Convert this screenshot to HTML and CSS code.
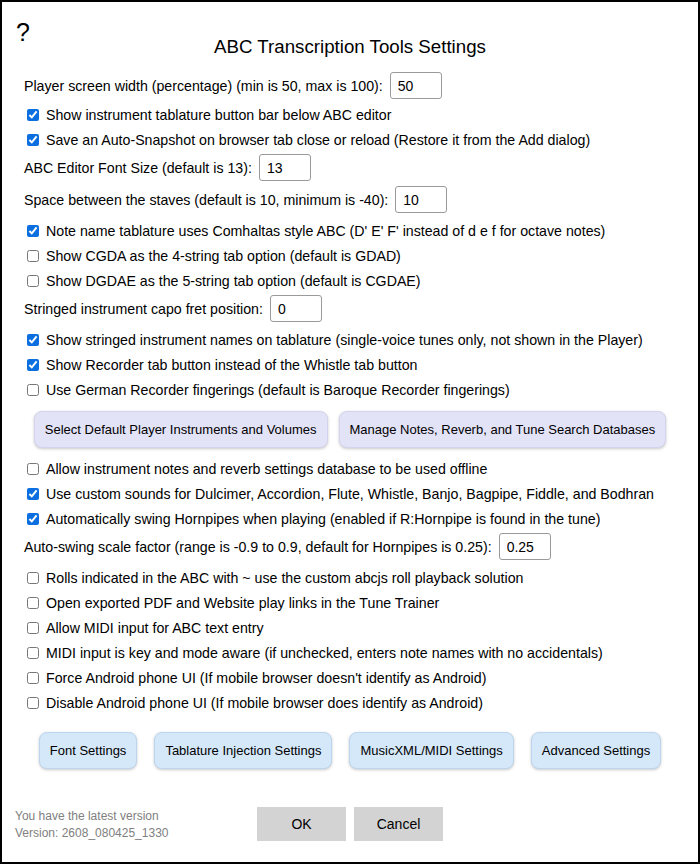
FILE: index.html
```html
<!DOCTYPE html>
<html>
<head>
<meta charset="utf-8">
<title>ABC Transcription Tools Settings</title>
<link rel="stylesheet" href="styles.css">
</head>
<body>
<div class="dialog">
  <button class="help">?</button>
  <h1 class="title">ABC Transcription Tools Settings</h1>
  <div class="rows">
    <div class="field first"><label>Player screen width (percentage) (min is 50, max is 100):</label><input class="num" type="text" value="50"></div>
    <label class="cb"><input type="checkbox" checked>Show instrument tablature button bar below ABC editor</label>
    <label class="cb"><input type="checkbox" checked>Save an Auto-Snapshot on browser tab close or reload (Restore it from the Add dialog)</label>
    <div class="field"><label>ABC Editor Font Size (default is 13):</label><input class="num" type="text" value="13"></div>
    <div class="field"><label>Space between the staves (default is 10, minimum is -40):</label><input class="num" type="text" value="10"></div>
    <label class="cb"><input type="checkbox" checked>Note name tablature uses Comhaltas style ABC (D' E' F' instead of d e f for octave notes)</label>
    <label class="cb"><input type="checkbox">Show CGDA as the 4-string tab option (default is GDAD)</label>
    <label class="cb"><input type="checkbox">Show DGDAE as the 5-string tab option (default is CGDAE)</label>
    <div class="field"><label>Stringed instrument capo fret position:</label><input class="num" type="text" value="0"></div>
    <label class="cb"><input type="checkbox" checked>Show stringed instrument names on tablature (single-voice tunes only, not shown in the Player)</label>
    <label class="cb"><input type="checkbox" checked>Show Recorder tab button instead of the Whistle tab button</label>
    <label class="cb"><input type="checkbox">Use German Recorder fingerings (default is Baroque Recorder fingerings)</label>
    <div class="btnrow purple-row">
      <button class="btn purple">Select Default Player Instruments and Volumes</button>
      <button class="btn purple">Manage Notes, Reverb, and Tune Search Databases</button>
    </div>
    <label class="cb"><input type="checkbox">Allow instrument notes and reverb settings database to be used offline</label>
    <label class="cb"><input type="checkbox" checked>Use custom sounds for Dulcimer, Accordion, Flute, Whistle, Banjo, Bagpipe, Fiddle, and Bodhran</label>
    <label class="cb"><input type="checkbox" checked>Automatically swing Hornpipes when playing (enabled if R:Hornpipe is found in the tune)</label>
    <div class="field"><label>Auto-swing scale factor (range is -0.9 to 0.9, default for Hornpipes is 0.25):</label><input class="num" type="text" value="0.25"></div>
    <label class="cb"><input type="checkbox">Rolls indicated in the ABC with ~ use the custom abcjs roll playback solution</label>
    <label class="cb"><input type="checkbox">Open exported PDF and Website play links in the Tune Trainer</label>
    <label class="cb"><input type="checkbox">Allow MIDI input for ABC text entry</label>
    <label class="cb"><input type="checkbox">MIDI input is key and mode aware (if unchecked, enters note names with no accidentals)</label>
    <label class="cb"><input type="checkbox">Force Android phone UI (If mobile browser doesn't identify as Android)</label>
    <label class="cb"><input type="checkbox">Disable Android phone UI (If mobile browser does identify as Android)</label>
    <div class="btnrow blue-row">
      <button class="btn blue">Font Settings</button>
      <button class="btn blue">Tablature Injection Settings</button>
      <button class="btn blue">MusicXML/MIDI Settings</button>
      <button class="btn blue">Advanced Settings</button>
    </div>
  </div>
  <div class="footer">
    <div class="version">
      <div>You have the latest version</div>
      <div>Version: 2608_080425_1330</div>
    </div>
    <div class="actions">
      <button class="act">OK</button>
      <button class="act">Cancel</button>
    </div>
    <div></div>
  </div>
</div>
</body>
</html>
```
FILE: styles.css
```css
html, body {
  margin: 0;
  padding: 0;
  background: #fff;
}

body {
  font-family: "Liberation Sans", Arial, sans-serif;
  color: #000;
}

.dialog {
  position: relative;
  box-sizing: border-box;
  width: 700px;
  height: 864px;
  border: 2px solid #000;
  background: #fff;
}

.help {
  position: absolute;
  left: 14px;
  top: 16px;
  border: 0;
  background: none;
  padding: 0;
  font-family: "Liberation Sans", Arial, sans-serif;
  font-size: 25px;
  line-height: 29px;
  color: #000;
}

.title {
  margin: 0;
  padding-top: 34px;
  font-size: 18.7px;
  line-height: 22px;
  font-weight: normal;
  text-align: center;
}

.rows {
  padding: 0 22px;
  font-size: 14.2px;
}

.field {
  display: flex;
  align-items: center;
  height: 27px;
  margin: 2px 0 5px;
}

.field.first {
  margin-top: 14px;
  margin-bottom: 3px;
}

.num {
  box-sizing: border-box;
  width: 52px;
  height: 27px;
  margin: 0 0 0 7px;
  padding: 0 7px;
  border: 1px solid #9a9a9a;
  border-radius: 3px;
  font-family: "Liberation Sans", Arial, sans-serif;
  font-size: 14px;
  color: #000;
  background: #fff;
}

.cb {
  display: flex;
  align-items: center;
  height: 25px;
  white-space: nowrap;
}

.cb input {
  width: 12px;
  height: 12px;
  margin: 0 7px 0 3px;
  accent-color: #0b6fe0;
}

.btnrow {
  display: flex;
  justify-content: center;
}

.purple-row {
  gap: 11px;
  margin: 9px 0 8px;
}

.blue-row {
  gap: 17px;
  margin: 17px 0 0;
}

.btn {
  height: 37px;
  padding: 0 10px;
  border-radius: 8px;
  font-family: "Liberation Sans", Arial, sans-serif;
  font-size: 13px;
  color: #000;
  box-shadow: 0 1px 3px rgba(0, 0, 0, 0.22);
}

.purple {
  background: #e3e3f8;
  border: 1px solid #d3d3ee;
}

.blue {
  background: #d5e8fa;
  border: 1px solid #bcd6ef;
}

.footer {
  display: grid;
  grid-template-columns: 1fr auto 1fr;
  align-items: center;
  margin-top: 36px;
  padding: 0 13px;
}

.version {
  padding-top: 3px;
  font-size: 12px;
  line-height: 17px;
  color: #808080;
}

.actions {
  display: flex;
  gap: 8px;
}

.act {
  width: 89px;
  height: 34px;
  border: 0;
  border-radius: 0;
  background: #d3d3d3;
  font-family: "Liberation Sans", Arial, sans-serif;
  font-size: 14px;
  color: #000;
}
```
